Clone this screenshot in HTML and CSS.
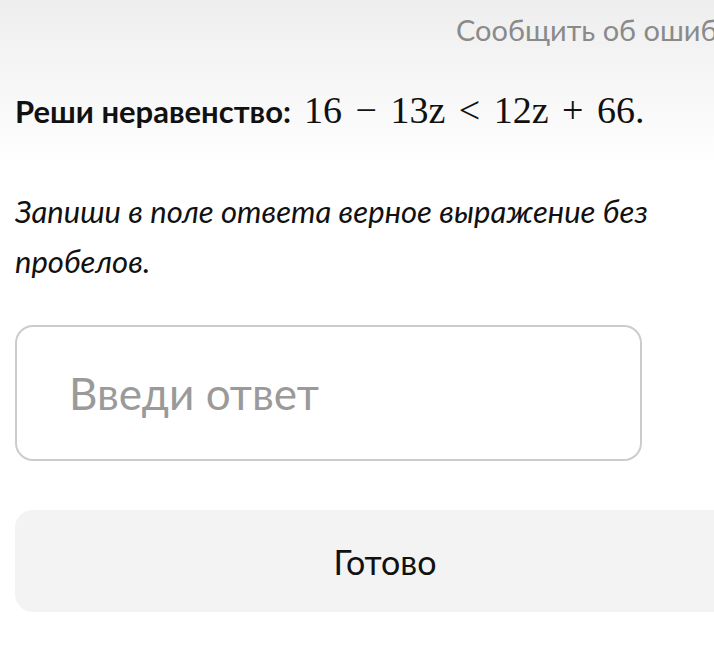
FILE: index.html
```html
<!DOCTYPE html>
<html>
<head>
  <link rel="stylesheet" href="styles.css">
</head>
<body>

  <div class="page">
    <!-- Top link -->
    <div class="report">Сообщить об ошибке</div>

    <!-- Task -->
    <h1 class="task">
      <span class="task-label">Реши неравенство:</span>
      <span class="math">16 <span class="op">−</span> 13z <span class="op">&lt;</span> 12z <span class="op">+</span> 66.</span>
    </h1>

    <p class="hint">Запиши в поле ответа верное выражение без пробелов.</p>

    <input class="answer" placeholder="Введи ответ">

    <button class="done">Готово</button>
  </div>

</body>
</html>
```

FILE: styles.css
```css
html {
  background: #fff;
}

body {
  margin: 0;
  min-height: 100vh;
  overflow: hidden;
  background: linear-gradient(#eeeeee 0px, #ffffff 170px);
  font-family: Lato, sans-serif;
  color: #111;
}

.page {
  width: 780px;
  padding: 0 0 0 15px;
  box-sizing: border-box;
}

.report {
  padding-top: 12px;
  padding-left: 441px;
  font-size: 29px;
  color: #8a8a8a;
  white-space: nowrap;
}

.task {
  margin: 41px 0 0 0;
  font-size: 31px;
  font-weight: normal;
  display: flex;
  align-items: baseline;
  gap: 13px;
}

.task-label {
  font-weight: 700;
}

.math {
  font-family: "Liberation Serif", serif;
  font-size: 38px;
}

.math .op {
  padding: 0 4px;
}

.hint {
  width: 660px;
  margin: 54px 0 0 0;
  font-size: 31px;
  font-style: italic;
  line-height: 50px;
}

.answer {
  display: block;
  margin-top: 39px;
  width: 627px;
  height: 136px;
  box-sizing: border-box;
  border: 2px solid #cccccc;
  border-radius: 18px;
  padding: 0 0 0 52px;
  font-family: Lato, sans-serif;
  font-size: 44px;
  outline: none;
  background: #fff;
}

.answer::placeholder {
  color: #9a9a9a;
}

.done {
  display: block;
  margin-top: 49px;
  width: 740px;
  height: 102px;
  border: none;
  border-radius: 18px;
  background: #f3f3f3;
  font-family: Lato, sans-serif;
  font-size: 34px;
  color: #111;
}
```
